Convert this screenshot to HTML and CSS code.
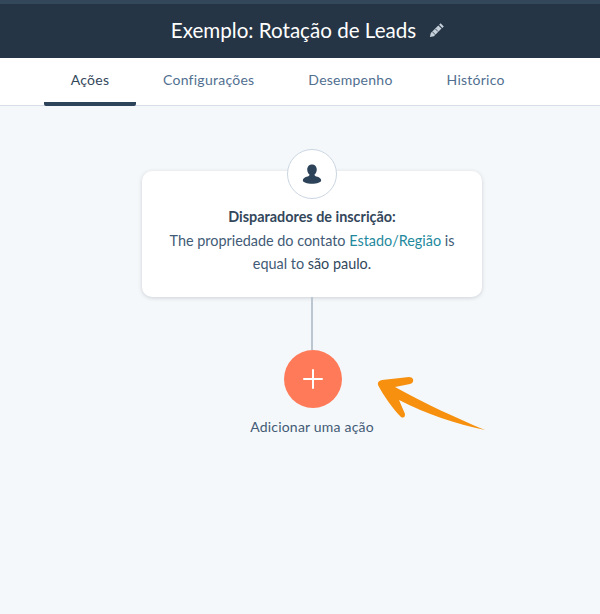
FILE: index.html
```html
<!DOCTYPE html>
<html lang="pt">
<head>
<meta charset="utf-8">
<title>Exemplo: Rotação de Leads</title>
<link rel="stylesheet" href="styles.css">
</head>
<body>
<header class="header">
  <h1 class="title">Exemplo: Rotação de Leads</h1>
  <svg class="pencil" viewBox="0 0 16 16" width="16" height="16"><path d="M11.6 1.200l3.200 3.200-1.500 1.500-3.200-3.200zM9.300 3.400l3.200 3.200-7.600 7.600-4 .9.9-4z" fill="#c6d0da"/><path d="M3.200 9.600l3.200 3.200M6.500 7l2.500 2.500" stroke="#253545" stroke-width=".8"/></svg>
</header>
<nav class="tabs">
  <a class="tab tab-active">Ações</a>
  <a class="tab">Configurações</a>
  <a class="tab">Desempenho</a>
  <a class="tab">Histórico</a>
</nav>
<main class="canvas">
  <div class="badge">
    <svg viewBox="0 0 24 24" width="22" height="24"><path d="M12 1.500c3.300 0 5.200 2.500 5.200 5.600 0 2.400-1 4.600-2.600 5.700.2 1 1 1.500 2.200 1.800 3 .8 5.200 1.900 5.200 4.400 0 1.900-4.600 3.500-10 3.500S2 20.900 2 19c0-2.500 2.200-3.600 5.200-4.400 1.200-.3 2-.8 2.200-1.800C7.800 11.700 6.800 9.500 6.800 7.100c0-3.100 1.900-5.600 5.200-5.600z" fill="#2d4359"/></svg>
  </div>
  <section class="card">
    <p class="card-title">Disparadores de inscrição:</p>
    <p class="card-text">The propriedade do contato <span class="link">Estado/Região</span> is<br>equal to <span class="strong">são paulo.</span></p>
  </section>
  <div class="line"></div>
  <div class="add">
    <svg viewBox="0 0 20 20" width="20" height="20"><path d="M10 1v18M1 10h18" stroke="#fff" stroke-width="2" stroke-linecap="round"/></svg>
  </div>
  <p class="add-label">Adicionar uma ação</p>
  <svg class="arrow" viewBox="0 0 110 56" width="110" height="56"><path d="M109 54C80 42 50 28 19 11L34 8Q38 7 37 3 36 1 33 1L6 4Q1 5 2 9C8 20 16 32 25 41Q29 43 29 38L23 24C50 38 80 48 109 54z" fill="#f6900e"/></svg>
</main>
</body>
</html>
```
FILE: styles.css
```css
* { box-sizing: border-box; }
html, body { margin: 0; height: 100%; }
body {
  width: 600px;
  height: 614px;
  overflow: hidden;
  font-family: Lato, "Open Sans", sans-serif;
  color: #33475b;
  background: #f5f8fa;
  display: flex;
  flex-direction: column;
}
.header {
  height: 58px;
  flex: none;
  background: #253545;
  border-top: 4px solid #33475b;
  display: flex;
  align-items: center;
  justify-content: center;
  gap: 13px;
  padding: 0 0 3px 16px;
}
.title {
  margin: 0;
  font-size: 20.6px;
  font-weight: 400;
  color: #fff;
  white-space: nowrap;
}
.pencil { flex: none; }
.tabs {
  height: 48px;
  flex: none;
  background: #fff;
  border-bottom: 1px solid #d6dfe8;
  display: flex;
  padding-left: 44px;
}
.tab {
  height: 48px;
  padding: 13px 27px 0;
  font-size: 14px;
  line-height: 18px;
  letter-spacing: .25px;
  color: #516f90;
  white-space: nowrap;
}
.tab-active {
  width: 92px;
  color: #33475b;
  text-align: center;
  border-bottom: 4px solid #2d4359;
  border-radius: 0 0 2px 2px;
  padding-left: 0;
  padding-right: 0;
}
.canvas {
  position: relative;
  flex: 1;
  display: flex;
  flex-direction: column;
  align-items: center;
  padding: 43px 0 0 24px;
}
.badge {
  width: 50px;
  height: 50px;
  flex: none;
  border-radius: 50%;
  background: #fff;
  border: 1px solid #cbd6e2;
  display: flex;
  align-items: center;
  justify-content: center;
  margin-bottom: -28px;
  position: relative;
  z-index: 1;
}
.card {
  width: 340px;
  height: 126px;
  flex: none;
  background: #fff;
  border-radius: 10px;
  box-shadow: 0 1px 4px rgba(45, 62, 80, .2);
  padding-top: 34px;
  text-align: center;
  font-size: 14.4px;
  line-height: 23.5px;
}
.card-title { margin: 0; font-weight: 700; color: #33475b; }
.card-text { margin: 0; color: #425b76; }
.link { color: #1f8a9e; }
.strong { color: #33475b; font-weight: 400; }
.line { width: 1.5px; height: 53px; flex: none; background: #bcc6d0; }
.add {
  width: 58px;
  height: 58px;
  flex: none;
  margin-left: 2px;
  border-radius: 50%;
  background: #ff7a59;
  display: flex;
  align-items: center;
  justify-content: center;
}
.add-label {
  margin: 9px 0 0;
  font-size: 14px;
  line-height: 20px;
  color: #425b76;
  letter-spacing: .2px;
}
.arrow { position: absolute; left: 376px; top: 270px; }
```
